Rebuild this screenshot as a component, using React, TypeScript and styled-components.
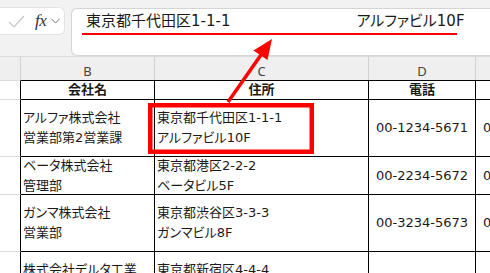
import React from "react";
import styled, { createGlobalStyle } from "styled-components";

const GlobalStyle = createGlobalStyle`
  html, body {
    margin: 0;
    padding: 0;
    background: #ffffff;
  }
  body {
    font-family: "DejaVu Sans", "Noto Sans CJK JP", sans-serif;
    color: #1a1a1a;
  }
`;

type Company = {
  name: string[];
  address: string[];
  tel: string;
  fax: string;
  height: number;
};

const companies: Company[] = [
  {
    name: ["アルファ株式会社", "営業部第2営業課"],
    address: ["東京都千代田区1-1-1", "アルファビル10F"],
    tel: "00-1234-5671",
    fax: "00-1234-5679",
    height: 57,
  },
  {
    name: ["ベータ株式会社", "管理部"],
    address: ["東京都港区2-2-2", "ベータビル5F"],
    tel: "00-2234-5672",
    fax: "00-2234-5679",
    height: 38,
  },
  {
    name: ["ガンマ株式会社", "営業部"],
    address: ["東京都渋谷区3-3-3", "ガンマビル8F"],
    tel: "00-3234-5673",
    fax: "00-3234-5679",
    height: 57,
  },
  {
    name: ["株式会社デルタ工業", "技術部"],
    address: ["東京都新宿区4-4-4", "デルタビル3F"],
    tel: "00-4234-5674",
    fax: "00-4234-5679",
    height: 57,
  },
];

const columns = "21px 134px 214px 107px 107px";

const Frame = styled.div`
  position: relative;
  width: 490px;
  height: 273px;
  overflow: hidden;
  background: #fff;
  font-feature-settings: "palt";
`;

const Toolbar = styled.div`
  display: flex;
  align-items: flex-start;
  gap: 7px;
  height: 56px;
  padding-top: 8px;
  box-sizing: border-box;
  background: #f2f2f2;
`;

const ActionBox = styled.div`
  display: flex;
  align-items: center;
  width: 64px;
  height: 26px;
  flex-shrink: 0;
  background: #fff;
  border-radius: 0 5px 5px 0;
  box-shadow: 0 0 0 1px #e4e4e4;
`;

const Check = styled.svg`
  margin-left: 8px;
  width: 17px;
  height: 13px;
`;

const Fx = styled.span`
  margin-left: 10px;
  font-family: "Liberation Serif", serif;
  font-style: italic;
  font-size: 17px;
  color: #333;
  letter-spacing: -0.5px;
`;

const Chevron = styled.svg`
  margin-left: 5px;
  width: 9px;
  height: 6px;
`;

const FormulaBox = styled.div`
  display: flex;
  align-items: flex-start;
  gap: 126px;
  flex: 1;
  min-width: 440px;
  height: 48px;
  padding: 2px 0 0 14px;
  box-sizing: border-box;
  background: #fff;
  border: 1px solid #d4d4d4;
  border-right: none;
  border-radius: 6px 0 0 6px;
  font-size: 15px;
  line-height: 20px;
  white-space: nowrap;
`;

const HeaderRow = styled.div`
  display: grid;
  grid-template-columns: ${columns};
  height: 24px;
  background: #efefef;
  border-top: 1px solid #dcdcdc;
  box-sizing: border-box;
`;

const ColLetter = styled.div`
  border-right: 1px solid #d2d2d2;
  text-align: center;
  padding-top: 5px;
  font-family: "Noto Sans", sans-serif;
  font-size: 13px;
  line-height: 18px;
  color: #444;
`;

const Grid = styled.div<{ $rows: string }>`
  display: grid;
  grid-template-columns: ${columns};
  grid-template-rows: ${(p) => p.$rows};
`;

const RowHead = styled.div<{ $first?: boolean }>`
  box-sizing: border-box;
  border-right: 1px solid #000;
  border-bottom: 1px solid #dadada;
  border-top: ${(p) => (p.$first ? "1px solid #dadada" : "none")};
`;

const Cell = styled.div<{ $first?: boolean; $center?: boolean; $bold?: boolean }>`
  display: flex;
  flex-direction: column;
  justify-content: center;
  align-items: ${(p) => (p.$center ? "center" : "flex-start")};
  box-sizing: border-box;
  padding: 0 2px;
  border-right: 1px solid #000;
  border-bottom: 1px solid #000;
  border-top: ${(p) => (p.$first ? "1px solid #000" : "none")};
  font-size: 13px;
  line-height: 20px;
  font-weight: ${(p) => (p.$bold ? 700 : 400)};
  white-space: nowrap;
  overflow: hidden;
`;

const Overlay = styled.svg`
  position: absolute;
  left: 0;
  top: 0;
  pointer-events: none;
`;

const Lines = ({ items }: { items: string[] }) => (
  <>
    {items.map((t) => (
      <span key={t}>{t}</span>
    ))}
  </>
);

export default function App() {
  const rowSizes = ["20px", ...companies.map((c) => `${c.height}px`)].join(" ");
  return (
    <>
      <GlobalStyle />
      <Frame>
        <Toolbar>
          <ActionBox>
            <Check viewBox="0 0 17 13">
              <path d="M1 7 L6 12 L16 1" fill="none" stroke="#c4c4c4" strokeWidth="1.2" />
            </Check>
            <Fx>fx</Fx>
            <Chevron viewBox="0 0 9 6">
              <path d="M0.5 0.8 L4.5 5 L8.5 0.8" fill="none" stroke="#777" strokeWidth="1" />
            </Chevron>
          </ActionBox>
          <FormulaBox>
            <span>東京都千代田区1-1-1</span>
            <span>アルファビル10F</span>
          </FormulaBox>
        </Toolbar>

        <HeaderRow>
          <ColLetter />
          <ColLetter>B</ColLetter>
          <ColLetter>C</ColLetter>
          <ColLetter>D</ColLetter>
          <ColLetter>E</ColLetter>
        </HeaderRow>

        <Grid $rows={rowSizes}>
          <RowHead $first />
          <Cell $first $center $bold>会社名</Cell>
          <Cell $first $center $bold>住所</Cell>
          <Cell $first $center $bold>電話</Cell>
          <Cell $first $center $bold>FAX</Cell>
          {companies.map((c) => (
            <React.Fragment key={c.tel}>
              <RowHead />
              <Cell>
                <Lines items={c.name} />
              </Cell>
              <Cell>
                <Lines items={c.address} />
              </Cell>
              <Cell $center>{c.tel}</Cell>
              <Cell $center>{c.fax}</Cell>
            </React.Fragment>
          ))}
        </Grid>

        <Overlay width="490" height="273" viewBox="0 0 490 273">
          <line x1="82" y1="34" x2="457" y2="34" stroke="#ff0000" strokeWidth="2" />
          <rect
            x="150.25"
            y="105.25"
            width="161.5"
            height="46.5"
            fill="none"
            stroke="#ff0000"
            strokeWidth="4.5"
          />
          <line x1="228" y1="102" x2="263" y2="52" stroke="#ff0000" strokeWidth="3.5" />
          <polygon points="272,39 267.5,60 253.5,50.5" fill="#ff0000" />
        </Overlay>
      </Frame>
    </>
  );
}
